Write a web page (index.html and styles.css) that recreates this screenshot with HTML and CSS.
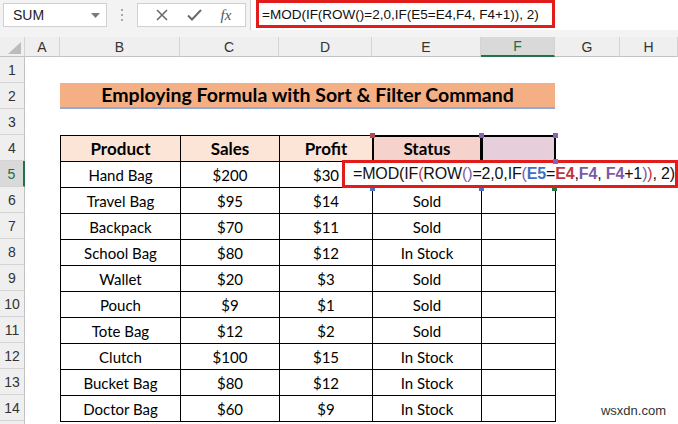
FILE: index.html
```html
<!DOCTYPE html>
<html lang="en">
	<head>
		<meta charset="UTF-8" />
		<title>Sort &amp; Filter Formula</title>
		<link rel="stylesheet" href="styles.css">
	</head>
	<body>
		<div class="app">
			<div class="toolbar">
				<div class="namebox">
					<span>SUM</span>
					<svg class="caret" width="9" height="5" viewBox="0 0 9 5"><path d="M0 0h9L4.5 5z" fill="#7a7a7a" /></svg>
				</div>
				<div class="grip"><i></i><i></i><i></i></div>
				<div class="fbuttons">
					<svg width="12" height="12" viewBox="0 0 12 12"><path d="M1 1l10 10M11 1L1 11" stroke="#6b6b6b" stroke-width="1.6" /></svg>
					<svg width="15" height="12" viewBox="0 0 15 12"><path d="M1 6.5l4 4L14 1" stroke="#6b6b6b" stroke-width="2" fill="none" /></svg>
					<span class="fx">fx</span>
				</div>
				<div class="fbar">
					<span class="fbar-text">=MOD(IF(ROW()=2,0,IF(E5=E4,F4, F4+1)), 2)</span>
				</div>
			</div>

			<div class="colheads">
				<div class="corner"><svg width="13" height="12" viewBox="0 0 13 12"><path d="M13 0v12H0z" fill="#bcbcbc" /></svg></div>
				<div>A</div>
				<div>B</div>
				<div>C</div>
				<div>D</div>
				<div>E</div>
				<div class="active">F</div>
				<div>G</div>
				<div>H</div>
			</div>

			<div class="sheet">
				<div class="rowheads">
					<div>1</div><div>2</div><div>3</div><div>4</div>
					<div class="active">5</div>
					<div>6</div><div>7</div><div>8</div><div>9</div><div>10</div>
					<div>11</div><div>12</div><div>13</div><div>14</div><div class="last"></div>
				</div>

				<div class="canvas">
					<div class="title">Employing Formula with Sort &amp; Filter Command</div>

					<table class="data">
						<colgroup>
							<col style="width:120px" />
							<col style="width:99px" />
							<col style="width:93px" />
							<col style="width:109px" />
							<col style="width:74px" />
						</colgroup>
						<tr class="head">
							<th>Product</th>
							<th>Sales</th>
							<th>Profit</th>
							<th class="ref ref-red">Status<i class="tl"></i><i class="tr"></i></th>
							<th class="ref ref-purple"><i class="tl"></i><i class="tr"></i><i class="br"></i></th>
						</tr>
						<tr><td>Hand Bag</td><td>$200</td><td>$30</td><td></td><td></td></tr>
						<tr><td>Travel Bag</td><td>$95</td><td>$14</td><td>Sold</td><td></td></tr>
						<tr><td>Backpack</td><td>$70</td><td>$11</td><td>Sold</td><td></td></tr>
						<tr><td>School Bag</td><td>$80</td><td>$12</td><td>In Stock</td><td></td></tr>
						<tr><td>Wallet</td><td>$20</td><td>$3</td><td>Sold</td><td></td></tr>
						<tr><td>Pouch</td><td>$9</td><td>$1</td><td>Sold</td><td></td></tr>
						<tr><td>Tote Bag</td><td>$12</td><td>$2</td><td>Sold</td><td></td></tr>
						<tr><td>Clutch</td><td>$100</td><td>$15</td><td>In Stock</td><td></td></tr>
						<tr><td>Bucket Bag</td><td>$80</td><td>$12</td><td>In Stock</td><td></td></tr>
						<tr><td>Doctor Bag</td><td>$60</td><td>$9</td><td>In Stock</td><td></td></tr>
					</table>
				</div>
			</div>

			<span class="handle h-blue h-e5l"></span>
			<span class="handle h-blue h-e5r"></span>
			<span class="handle h-fill"></span>

			<div class="edit-overlay">=MOD(IF<span class="c-red">(</span>ROW<span class="c-purple">()</span>=2,0,IF<span class="c-purple">(</span><b class="c-blue">E5</b>=<b class="c-red">E4</b>,<b class="c-purple">F4</b>, <b class="c-purple">F4</b>+1<span class="c-purple">)</span><span class="c-red">)</span>, 2)</div>

			<div class="watermark">wsxdn.com</div>
		</div>
	</body>
</html>
```

FILE: styles.css
```css
body {
	margin: 0;
	background-color: #ffffff;
	font-family: 'Lato', 'Liberation Sans', sans-serif;
	color: #000000;
}

.app {
	position: relative;
	width: 678px;
	height: 424px;
	overflow: hidden;
}

/* formula bar */

.toolbar {
	display: flex;
	align-items: flex-start;
	height: 37px;
	background-color: #f3f3f3;
	box-sizing: border-box;
}

.namebox {
	display: flex;
	align-items: center;
	justify-content: space-between;
	box-sizing: border-box;
	margin: 3px 0 0 3px;
	width: 104px;
	height: 24px;
	padding: 0 6px 0 9px;
	background-color: #ffffff;
	border: 1px solid #d0d0d0;
	font-family: 'Liberation Sans', sans-serif;
	font-size: 14px;
	color: #222222;
}

.grip {
	display: flex;
	flex-direction: column;
	align-items: center;
	gap: 3px;
	width: 30px;
	margin-top: 9px;
}

.grip i {
	width: 2px;
	height: 2px;
	background-color: #a9a9a9;
}

.fbuttons {
	display: flex;
	align-items: center;
	justify-content: space-around;
	box-sizing: border-box;
	margin-top: 3px;
	width: 109px;
	height: 24px;
	padding: 0 4px 0 8px;
	background-color: #ffffff;
	border: 1px solid #d0d0d0;
}

.fx {
	font-family: 'Liberation Serif', serif;
	font-style: italic;
	font-size: 15px;
	color: #555555;
}

.fbar {
	flex: 1;
	height: 30px;
	margin-left: 4px;
	background-color: #ffffff;
	border-left: 1px solid #d0d0d0;
	box-sizing: border-box;
}

.fbar-text {
	display: inline-flex;
	align-items: center;
	box-sizing: border-box;
	height: 28px;
	margin-left: 5px;
	padding: 0 13px 0 3px;
	border: 3px solid #e21b1b;
	font-family: 'Liberation Sans', sans-serif;
	font-size: 13.5px;
	color: #111111;
}

/* headers */

.colheads {
	display: grid;
	grid-template-columns: 25px 35px 120px 99px 93px 109px 74px 65px 1fr;
	height: 20px;
	background-color: #efefef;
	font-family: 'Liberation Sans', sans-serif;
	font-size: 14px;
	color: #333333;
}

.colheads div {
	display: flex;
	align-items: center;
	justify-content: center;
	border-right: 1px solid #d4d4d4;
	border-bottom: 1px solid #c2c2c2;
	box-sizing: border-box;
}

.colheads .corner {
	align-items: flex-end;
	justify-content: flex-end;
	padding: 0 3px 2px 0;
}

.colheads .active {
	background-color: #d9d9d9;
	border-bottom: 2px solid #217346;
	color: #1e6b40;
}

.sheet {
	display: grid;
	grid-template-columns: 25px 1fr;
}

.rowheads div {
	display: flex;
	align-items: center;
	justify-content: center;
	height: 26px;
	box-sizing: border-box;
	background-color: #efefef;
	border-right: 1px solid #c2c2c2;
	border-bottom: 1px solid #d4d4d4;
	font-family: 'Liberation Sans', sans-serif;
	font-size: 14px;
	color: #333333;
}

.rowheads .active {
	background-color: #d9d9d9;
	border-right: 2px solid #217346;
	color: #1e6b40;
}

/* sheet content */

.canvas {
	padding: 26px 0 0 35px;
}

.title {
	box-sizing: border-box;
	width: 495px;
	height: 26px;
	background-color: #f4b084;
	border-bottom: 2px solid #8ea9db;
	font-weight: bold;
	font-size: 19.5px;
	line-height: 24px;
	text-align: center;
}

.data {
	margin-top: 26px;
	width: 495px;
	table-layout: fixed;
	border-collapse: collapse;
	font-size: 15px;
}

.data td,
.data th {
	height: 26px;
	padding: 0;
	border: 1px solid #000000;
	text-align: center;
	box-sizing: border-box;
}

.data .head th {
	background-color: #fce4d6;
	font-size: 17px;
}

.data .ref {
	position: relative;
}

.data .ref::after {
	content: '';
	position: absolute;
	inset: -1px;
	border: 2px solid;
	pointer-events: none;
}

.data .head .ref-red {
	background-color: #f5d3cc;
}

.ref-red::after {
	border-color: #b8464f;
}

.data .head .ref-purple {
	background-color: #e6cedb;
}

.ref-purple::after {
	border-color: #8a64b0;
}

.ref i {
	position: absolute;
	width: 5px;
	height: 5px;
	z-index: 1;
}

.ref-red i {
	background-color: #b8464f;
}

.ref-purple i {
	background-color: #8a64b0;
}

.ref .tl {
	top: -3px;
	left: -3px;
}

.ref .tr {
	top: -3px;
	right: -3px;
}

.ref .br {
	bottom: -3px;
	right: -3px;
}

/* editing overlay */

.handle {
	position: absolute;
	top: 186px;
	width: 5px;
	height: 5px;
}

.h-blue {
	background-color: #4a72c2;
}

.h-e5l {
	left: 370px;
}

.h-e5r {
	left: 479px;
}

.h-fill {
	left: 552px;
	background-color: #217346;
}

.edit-overlay {
	position: absolute;
	left: 342px;
	top: 160px;
	width: 336px;
	height: 28px;
	box-sizing: border-box;
	padding-left: 8px;
	background-color: #ffffff;
	border: 3px solid #e21b1b;
	font-family: 'Liberation Sans', sans-serif;
	font-size: 16px;
	letter-spacing: -0.15px;
	line-height: 22px;
	white-space: nowrap;
	color: #111111;
}

.c-red {
	color: #c0353d;
}

.c-purple {
	color: #7d5aa8;
}

.c-blue {
	color: #3f6fc4;
}

.watermark {
	position: absolute;
	right: 12px;
	bottom: 6px;
	font-family: 'Liberation Sans', sans-serif;
	font-size: 13px;
	color: #333333;
}
```
